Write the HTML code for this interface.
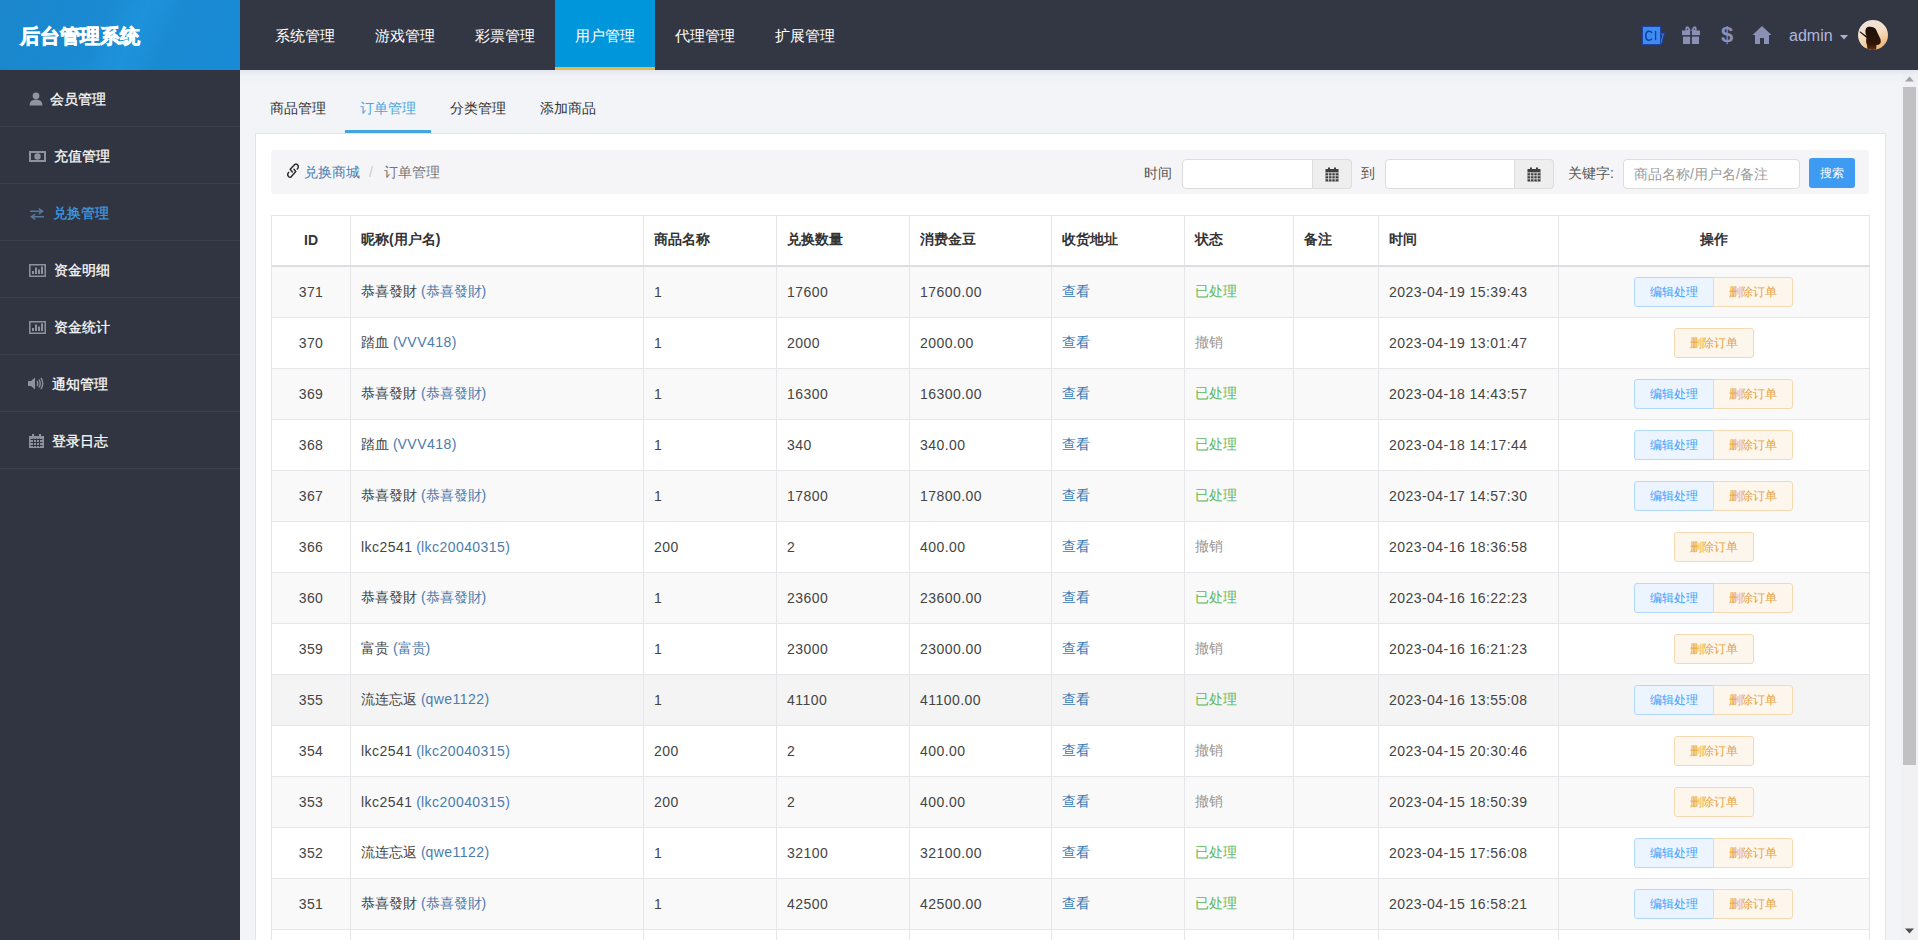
<!DOCTYPE html>
<html><head><meta charset="utf-8">
<style>
*{box-sizing:border-box;margin:0;padding:0}
html,body{width:1918px;height:940px;overflow:hidden;font-family:"Liberation Sans",sans-serif;font-size:14px;color:#444;background:#f1f2f6}
#side{position:absolute;left:0;top:0;width:240px;height:940px;background:#313541}
#logo{position:absolute;left:0;top:0;width:240px;height:70px;background:linear-gradient(115deg,#1b86cc 0%,#1a8ad2 40%,#1d93db 55%,#1a8ad2 70%,#198ad6 100%);color:#fff;font-size:20px;font-weight:bold;line-height:72px;padding-left:20px;-webkit-text-stroke:0.7px #fff}
.mi{position:absolute;left:0;width:240px;height:57px;border-bottom:1px solid #3b3f4b;color:#fff;font-size:14px;-webkit-text-stroke-width:0.25px}
.mi svg{position:absolute}
.mi .tx{position:absolute;top:19px;line-height:20px}
#top{position:absolute;left:240px;top:0;width:1678px;height:70px;background:#333744}
.nav{position:absolute;top:0;height:70px;width:100px;color:#fff;font-size:15px;line-height:71px;text-align:center}
.nav.on{background:#0096dc;border-bottom:3px solid #e0b94f}
#main{position:absolute;left:240px;top:70px;width:1678px;height:870px;background:#f3f4f7}
#shadow{position:absolute;left:240px;top:70px;width:1678px;height:14px;background:linear-gradient(#e2e5ec,rgba(238,240,246,0.6) 40%,rgba(243,244,247,0))}
.tab{position:absolute;top:93px;height:40px;width:86px;text-align:center;line-height:30px;color:#333;font-size:14px}
.tab.on{color:#4aa6dc;border-bottom:3px solid #44a4dc}
#panel{position:absolute;left:255px;top:133px;width:1631px;height:820px;background:#fff;border:1px solid #e3e4e8}
#crumb{position:absolute;left:271px;top:150px;width:1598px;height:44px;background:#f5f5f7;border-radius:4px}
#crumb .t{position:absolute;top:12px;line-height:20px;font-size:14px}
.lbl{position:absolute;top:163px;line-height:20px;color:#555;font-size:14px}
.inp{position:absolute;top:159px;height:30px;background:#fff;border:1px solid #ddd;border-radius:4px}
.addon{position:absolute;top:159px;height:30px;width:40px;background:#eee;border:1px solid #ddd;border-radius:0 4px 4px 0}
.addon svg{position:absolute;left:12px;top:7px}
#kw{color:#999;font-size:14px;line-height:28px;padding-left:10px}
#btn{position:absolute;left:1809px;top:158px;width:46px;height:30px;background:#3d9bf2;border-radius:3px;color:#fff;font-size:12px;line-height:30px;text-align:center}
table{position:absolute;left:271px;top:215px;border-collapse:collapse;table-layout:fixed;width:1598px}
td,th{border:1px solid #e6e6ea;height:51px;padding:0 10px;text-align:left;font-size:14px;white-space:nowrap;font-weight:normal}
th{font-weight:bold;color:#333;height:50px;border-bottom:2px solid #dcdde1}
tr.g td{background:#f9f9fa}
tr.h td{background:#f4f4f5}
.c{text-align:center}
th.c{text-align:center}
.lk{color:#4a7cae}
.vw{color:#3579b5}
.ok{color:#5cb85c}
.no{color:#999}
.bg{display:inline-block;vertical-align:middle;height:30px;position:relative;left:-1px}
.be,.bd{display:block;float:left;width:80px;height:30px;line-height:28px;font-size:12px;text-align:center;border:1px solid}
.be{background:#ecf5ff;border-color:#b3d8ff;color:#409eff;border-radius:3px 0 0 3px}
.bd{background:#fdf6ec;border-color:#f5dab1;color:#e6a23c;border-radius:0 3px 3px 0;margin-left:-1px}
.bd.solo{border-radius:3px;margin-left:0}
#sb{position:absolute;left:1901px;top:70px;width:17px;height:870px;background:#f1f1f4}
#thumb{position:absolute;left:1903px;top:87px;width:13px;height:678px;background:#c1c1c3}
.ab{position:absolute}
tr.f td{height:52px}

.n{letter-spacing:0.45px}
.bg.s{left:0}

</style></head><body>
<div id="main"></div>
<div id="side">
 <div id="logo">后台管理系统</div>
 <div class="mi" style="top:70px">
  <svg style="left:29px;top:22px" width="14" height="14" viewBox="0 0 14 14"><circle cx="7" cy="3.8" r="3.4" fill="#90949f"/><path d="M0.6 13.6Q0.4 7.6 7 7.6Q13.6 7.6 13.4 13.6Z" fill="#90949f"/></svg>
  <span class="tx" style="left:50px">会员管理</span></div>
 <div class="mi" style="top:127px">
  <svg style="left:29px;top:24px" width="17" height="11" viewBox="0 0 17 11"><path d="M0 0H17V11H0Z M2 2V9H15V2Z" fill="#8e929d" fill-rule="evenodd"/><circle cx="8.5" cy="5.5" r="3.2" fill="#8e929d"/></svg>
  <span class="tx" style="left:54px">充值管理</span></div>
 <div class="mi" style="top:184px">
  <svg style="left:29px;top:24px" width="16" height="12" viewBox="0 0 16 12"><path d="M1 3.2H13M9.8 0.6L13.6 3.2L9.8 5.8M15 8.8H3M6.2 6.2L2.4 8.8L6.2 11.4" stroke="#58789a" stroke-width="1.5" fill="none"/></svg>
  <span class="tx" style="left:53px;color:#3d9fe6">兑换管理</span></div>
 <div class="mi" style="top:241px">
  <svg style="left:29px;top:23px" width="17" height="13" viewBox="0 0 17 13"><path d="M0.8 0.8H16.2V12.2H0.8Z" stroke="#8e929d" stroke-width="1.5" fill="none"/><path d="M3 10V7H5V10ZM6 10V3.5H8V10ZM9 10V5.5H11V10ZM12 10V2.5H14V10Z" fill="#8e929d"/></svg>
  <span class="tx" style="left:54px">资金明细</span></div>
 <div class="mi" style="top:298px">
  <svg style="left:29px;top:23px" width="17" height="13" viewBox="0 0 17 13"><path d="M0.8 0.8H16.2V12.2H0.8Z" stroke="#8e929d" stroke-width="1.5" fill="none"/><path d="M3 10V7H5V10ZM6 10V3.5H8V10ZM9 10V5.5H11V10ZM12 10V2.5H14V10Z" fill="#8e929d"/></svg>
  <span class="tx" style="left:54px">资金统计</span></div>
 <div class="mi" style="top:355px">
  <svg style="left:28px;top:22px" width="16" height="13" viewBox="0 0 16 13" style=""><path d="M0 4H3L7 0.5V12.5L3 9H0Z" fill="#8e929d"/><path d="M9 4Q10.5 6.5 9 9M11 2.5Q13.5 6.5 11 10.5M13 1Q16.5 6.5 13 12" stroke="#8e929d" stroke-width="1.4" fill="none"/></svg>
  <span class="tx" style="left:52px">通知管理</span></div>
 <div class="mi" style="top:412px">
  <svg style="left:29px;top:22px" width="15" height="14" viewBox="0 0 15 14"><path d="M0 2H15V14H0Z" fill="#8e929d"/><path d="M3 0H5V3H3ZM10 0H12V3H10Z" fill="#8e929d"/><path d="M1.5 5.5H13.5M1.5 8.5H13.5M1.5 11.5H13.5M4.5 4.5V13M7.5 4.5V13M10.5 4.5V13" stroke="#313541" stroke-width="1"/></svg>
  <span class="tx" style="left:52px">登录日志</span></div>
</div>
<div id="top">
 <div class="nav" style="left:15px">系统管理</div>
 <div class="nav" style="left:115px">游戏管理</div>
 <div class="nav" style="left:215px">彩票管理</div>
 <div class="nav on" style="left:315px">用户管理</div>
 <div class="nav" style="left:415px">代理管理</div>
 <div class="nav" style="left:515px">扩展管理</div>
</div>
<svg class="ab" style="left:1642px;top:26px" width="23" height="20" viewBox="0 0 23 20"><path d="M18.5 7.5H22L19 18.5" stroke="#1a3f9c" stroke-width="2" fill="none"/><path d="M18.8 8H21.3L18.6 18" stroke="#5a8fe0" stroke-width="0.8" fill="none"/><rect x="0.5" y="0.5" width="18" height="18" fill="#3f8cf0" stroke="#1d45a8" stroke-width="1"/><path d="M10 7Q9.2 5.2 7 5.2Q3.8 5.2 3.8 9.7Q3.8 14.2 7 14.2Q9.2 14.2 10 12.5" stroke="#133c9e" stroke-width="1.5" fill="none"/><path d="M13.6 5V14.3" stroke="#133c9e" stroke-width="1.3"/></svg>
<svg class="ab" style="left:1681px;top:25px" width="20" height="20" viewBox="0 0 20 20"><path d="M4.5 6Q3.8 1.5 6.3 1.2Q8 1.2 10 6ZM15.5 6Q16.2 1.5 13.7 1.2Q12 1.2 10 6Z" fill="#8a90b6"/><path d="M5.8 5L6.5 3.3L7.6 5ZM14.2 5L13.5 3.3L12.4 5Z" fill="#333744"/><rect x="1" y="5.5" width="18" height="4.6" fill="#8a90b6"/><rect x="2" y="11.6" width="16" height="7.4" fill="#8a90b6"/><rect x="9.1" y="5.5" width="1.8" height="14" fill="#333744"/></svg>
<div class="ab" style="left:1718px;top:22px;width:18px;font-size:22px;line-height:26px;color:#8a90b6;font-weight:bold;text-align:center">$</div>
<svg class="ab" style="left:1752px;top:25px" width="20" height="20" viewBox="0 0 20 20"><path d="M10 1L0.5 10H3V19H8V13H12V19H17V10H19.5Z" fill="#8a90b6"/></svg>
<div class="ab" style="left:1789px;top:25px;font-size:16px;line-height:22px;color:#b0b6dc">admin</div>
<svg class="ab" style="left:1840px;top:35px" width="8" height="5" viewBox="0 0 8 5"><path d="M0 0H8L4 4.5Z" fill="#a9afd2"/></svg>
<svg class="ab" style="left:1858px;top:20px" width="30" height="30" viewBox="0 0 30 30"><defs><linearGradient id="av" x1="0.3" y1="0" x2="0.7" y2="1"><stop offset="0" stop-color="#efe3de"/><stop offset="0.45" stop-color="#f3dfc6"/><stop offset="1" stop-color="#f2b26c"/></linearGradient><linearGradient id="bd" x1="0" y1="0" x2="0" y2="1"><stop offset="0" stop-color="#1e0e08"/><stop offset="0.7" stop-color="#2e1508"/><stop offset="1" stop-color="#6a3414"/></linearGradient><clipPath id="cp"><circle cx="15" cy="15" r="15"/></clipPath></defs><circle cx="15" cy="15" r="15" fill="url(#av)"/><g clip-path="url(#cp)"><path d="M2 19Q4 26 9 29L3 26Z" fill="#f7ecb8"/><path d="M7.5 10Q8 7 11 6.8Q16 6.3 18 9.5Q19.5 13 21 16Q23.5 20 22.5 23Q21 25.5 18.5 25L18 31L9.5 31L9 25Q7.5 22 8.5 18L2 12.5L1.5 11.5L2.5 11.5L8.5 16Q7 13 7.5 10Z" fill="url(#bd)"/></g></svg>
<div class="tab" style="left:255px">商品管理</div>
<div class="tab on" style="left:345px">订单管理</div>
<div class="tab" style="left:435px">分类管理</div>
<div class="tab" style="left:525px">添加商品</div>
<div id="panel"></div>
<div id="crumb">
 <svg style="position:absolute;left:9px;top:8px" width="26" height="26" viewBox="0 0 26 26"><path d="M12.3 14L10.2 11.3L14.8 6.5Q16 5.5 17.3 6.6Q18.8 8 18.2 9.6L17.3 11M14 11.3L15.8 13.6L11.2 18.8Q10 19.8 8.7 18.7Q7.2 17.3 7.8 15.7L8.7 14.3" stroke="#2b2b2b" stroke-width="1.5" fill="none" stroke-linecap="round" stroke-linejoin="round"/></svg>
 <span class="t" style="left:33px;color:#4a7cae">兑换商城</span>
 <span class="t" style="left:98px;color:#ccc">/</span>
 <span class="t" style="left:113px;color:#777">订单管理</span>
</div>
<div class="lbl" style="left:1144px">时间</div>
<div class="inp" style="left:1182px;width:170px"></div>
<div class="addon" style="left:1312px"><svg width="14" height="15" viewBox="0 0 14 15"><path d="M0.5 2H13.5V14.5H0.5Z" fill="#3f3f3f"/><path d="M3 0.5H5V3H3ZM9 0.5H11V3H9Z" fill="#3f3f3f"/><path d="M0.5 5.8H13.5M0.5 8.8H13.5M0.5 11.8H13.5M3.6 5.5V14.5M6.9 5.5V14.5M10.2 5.5V14.5" stroke="#eee" stroke-width="0.8"/></svg></div>
<div class="lbl" style="left:1361px">到</div>
<div class="inp" style="left:1385px;width:169px"></div>
<div class="addon" style="left:1514px"><svg width="14" height="15" viewBox="0 0 14 15"><path d="M0.5 2H13.5V14.5H0.5Z" fill="#3f3f3f"/><path d="M3 0.5H5V3H3ZM9 0.5H11V3H9Z" fill="#3f3f3f"/><path d="M0.5 5.8H13.5M0.5 8.8H13.5M0.5 11.8H13.5M3.6 5.5V14.5M6.9 5.5V14.5M10.2 5.5V14.5" stroke="#eee" stroke-width="0.8"/></svg></div>
<div class="lbl" style="left:1568px">关键字:</div>
<div class="inp" id="kw" style="left:1623px;width:177px">商品名称/用户名/备注</div>
<div id="btn">搜索</div>
<table>
<colgroup><col style="width:79px"><col style="width:293px"><col style="width:133px"><col style="width:133px"><col style="width:142px"><col style="width:133px"><col style="width:109px"><col style="width:85px"><col style="width:180px"><col style="width:311px"></colgroup>
<tr><th class="c">ID</th><th>昵称(用户名)</th><th>商品名称</th><th>兑换数量</th><th>消费金豆</th><th>收货地址</th><th>状态</th><th>备注</th><th>时间</th><th class="c">操作</th></tr>
<tr class="g f"><td class="c"><span class="n">371</span></td><td>恭喜發財 <span class="lk">(恭喜發財)</span></td><td><span class="n">1</span></td><td><span class="n">17600</span></td><td><span class="n">17600.00</span></td><td><span class="vw">查看</span></td><td><span class="ok">已处理</span></td><td></td><td><span class="n">2023-04-19 15:39:43</span></td><td class="c"><div class="bg"><span class="be">编辑处理</span><span class="bd">删除订单</span></div></td></tr>
<tr class=""><td class="c"><span class="n">370</span></td><td>踏血 <span class="lk">(<span class="n">VVV418</span>)</span></td><td><span class="n">1</span></td><td><span class="n">2000</span></td><td><span class="n">2000.00</span></td><td><span class="vw">查看</span></td><td><span class="no">撤销</span></td><td></td><td><span class="n">2023-04-19 13:01:47</span></td><td class="c"><div class="bg s"><span class="bd solo">删除订单</span></div></td></tr>
<tr class="g"><td class="c"><span class="n">369</span></td><td>恭喜發財 <span class="lk">(恭喜發財)</span></td><td><span class="n">1</span></td><td><span class="n">16300</span></td><td><span class="n">16300.00</span></td><td><span class="vw">查看</span></td><td><span class="ok">已处理</span></td><td></td><td><span class="n">2023-04-18 14:43:57</span></td><td class="c"><div class="bg"><span class="be">编辑处理</span><span class="bd">删除订单</span></div></td></tr>
<tr class=""><td class="c"><span class="n">368</span></td><td>踏血 <span class="lk">(<span class="n">VVV418</span>)</span></td><td><span class="n">1</span></td><td><span class="n">340</span></td><td><span class="n">340.00</span></td><td><span class="vw">查看</span></td><td><span class="ok">已处理</span></td><td></td><td><span class="n">2023-04-18 14:17:44</span></td><td class="c"><div class="bg"><span class="be">编辑处理</span><span class="bd">删除订单</span></div></td></tr>
<tr class="g"><td class="c"><span class="n">367</span></td><td>恭喜發財 <span class="lk">(恭喜發財)</span></td><td><span class="n">1</span></td><td><span class="n">17800</span></td><td><span class="n">17800.00</span></td><td><span class="vw">查看</span></td><td><span class="ok">已处理</span></td><td></td><td><span class="n">2023-04-17 14:57:30</span></td><td class="c"><div class="bg"><span class="be">编辑处理</span><span class="bd">删除订单</span></div></td></tr>
<tr class=""><td class="c"><span class="n">366</span></td><td><span class="n">lkc2541</span> <span class="lk">(<span class="n">lkc20040315</span>)</span></td><td><span class="n">200</span></td><td><span class="n">2</span></td><td><span class="n">400.00</span></td><td><span class="vw">查看</span></td><td><span class="no">撤销</span></td><td></td><td><span class="n">2023-04-16 18:36:58</span></td><td class="c"><div class="bg s"><span class="bd solo">删除订单</span></div></td></tr>
<tr class="g"><td class="c"><span class="n">360</span></td><td>恭喜發財 <span class="lk">(恭喜發財)</span></td><td><span class="n">1</span></td><td><span class="n">23600</span></td><td><span class="n">23600.00</span></td><td><span class="vw">查看</span></td><td><span class="ok">已处理</span></td><td></td><td><span class="n">2023-04-16 16:22:23</span></td><td class="c"><div class="bg"><span class="be">编辑处理</span><span class="bd">删除订单</span></div></td></tr>
<tr class=""><td class="c"><span class="n">359</span></td><td>富贵 <span class="lk">(富贵)</span></td><td><span class="n">1</span></td><td><span class="n">23000</span></td><td><span class="n">23000.00</span></td><td><span class="vw">查看</span></td><td><span class="no">撤销</span></td><td></td><td><span class="n">2023-04-16 16:21:23</span></td><td class="c"><div class="bg s"><span class="bd solo">删除订单</span></div></td></tr>
<tr class="h"><td class="c"><span class="n">355</span></td><td>流连忘返 <span class="lk">(<span class="n">qwe1122</span>)</span></td><td><span class="n">1</span></td><td><span class="n">41100</span></td><td><span class="n">41100.00</span></td><td><span class="vw">查看</span></td><td><span class="ok">已处理</span></td><td></td><td><span class="n">2023-04-16 13:55:08</span></td><td class="c"><div class="bg"><span class="be">编辑处理</span><span class="bd">删除订单</span></div></td></tr>
<tr class=""><td class="c"><span class="n">354</span></td><td><span class="n">lkc2541</span> <span class="lk">(<span class="n">lkc20040315</span>)</span></td><td><span class="n">200</span></td><td><span class="n">2</span></td><td><span class="n">400.00</span></td><td><span class="vw">查看</span></td><td><span class="no">撤销</span></td><td></td><td><span class="n">2023-04-15 20:30:46</span></td><td class="c"><div class="bg s"><span class="bd solo">删除订单</span></div></td></tr>
<tr class="g"><td class="c"><span class="n">353</span></td><td><span class="n">lkc2541</span> <span class="lk">(<span class="n">lkc20040315</span>)</span></td><td><span class="n">200</span></td><td><span class="n">2</span></td><td><span class="n">400.00</span></td><td><span class="vw">查看</span></td><td><span class="no">撤销</span></td><td></td><td><span class="n">2023-04-15 18:50:39</span></td><td class="c"><div class="bg s"><span class="bd solo">删除订单</span></div></td></tr>
<tr class=""><td class="c"><span class="n">352</span></td><td>流连忘返 <span class="lk">(<span class="n">qwe1122</span>)</span></td><td><span class="n">1</span></td><td><span class="n">32100</span></td><td><span class="n">32100.00</span></td><td><span class="vw">查看</span></td><td><span class="ok">已处理</span></td><td></td><td><span class="n">2023-04-15 17:56:08</span></td><td class="c"><div class="bg"><span class="be">编辑处理</span><span class="bd">删除订单</span></div></td></tr>
<tr class="g"><td class="c"><span class="n">351</span></td><td>恭喜發財 <span class="lk">(恭喜發財)</span></td><td><span class="n">1</span></td><td><span class="n">42500</span></td><td><span class="n">42500.00</span></td><td><span class="vw">查看</span></td><td><span class="ok">已处理</span></td><td></td><td><span class="n">2023-04-15 16:58:21</span></td><td class="c"><div class="bg"><span class="be">编辑处理</span><span class="bd">删除订单</span></div></td></tr>
<tr class=""><td class="c"><span class="n">350</span></td><td>恭喜發財 <span class="lk">(恭喜發財)</span></td><td><span class="n">1</span></td><td><span class="n">42500</span></td><td><span class="n">42500.00</span></td><td><span class="vw">查看</span></td><td><span class="ok">已处理</span></td><td></td><td><span class="n">2023-04-15 16:58:21</span></td><td class="c"><div class="bg"><span class="be">编辑处理</span><span class="bd">删除订单</span></div></td></tr>
</table>
<div id="sb"></div><div id="thumb"></div>
<div id="shadow"></div>
<svg class="ab" style="left:1905px;top:76px" width="9" height="6" viewBox="0 0 9 6"><path d="M0 5.5H9L4.5 0.5Z" fill="#a3a3a3"/></svg>
<svg class="ab" style="left:1905px;top:928px" width="9" height="6" viewBox="0 0 9 6"><path d="M0 0.5H9L4.5 5.5Z" fill="#505050"/></svg>
</body></html>
